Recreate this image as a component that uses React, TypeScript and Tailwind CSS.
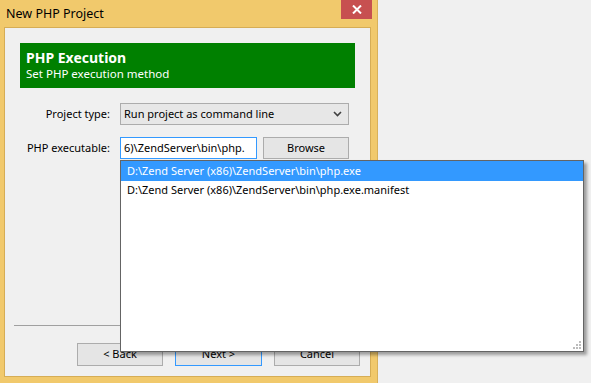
import React from "react";

export default function App() {
  const font = { fontFamily: '"Noto Sans", "Open Sans", sans-serif' };
  return (
    <div className="relative w-[591px] h-[383px] bg-[#f0f0f0] overflow-hidden text-[11px] text-black" style={font}>
      <div className="w-[378px] h-[383px] bg-[#f1c96c] border-r border-[#d8b15a] flex flex-col">
        <div className="h-[27px] flex items-start shrink-0">
          <div className="pl-[6px] pt-[5px] text-[12.5px] leading-[17px] text-black">New PHP Project</div>
          <div className="ml-auto mr-[5px] w-[31px] h-[19px] bg-[#c75050] flex items-center justify-center">
            <svg width="10" height="9" viewBox="0 0 10 9">
              <path d="M1 0.5 L9 8.5 M9 0.5 L1 8.5" stroke="white" strokeWidth="2" />
            </svg>
          </div>
        </div>
        <div className="ml-[4px] w-[367px] h-[350px] bg-[#f0f0f0] border border-[#d6ad55] flex flex-col shrink-0">
          <div className="pl-[15px] pt-[15px]">
            <div className="w-[335px] h-[45px] bg-[#008000] text-white px-[6px] pt-[6px]">
              <div className="text-[14px] font-bold leading-[17px]">PHP Execution</div>
              <div className="text-[11.5px] leading-[15px]">Set PHP execution method</div>
            </div>
          </div>
          <div className="flex items-center mt-[15px] h-[22px]">
            <div className="w-[106px] text-right pr-[1px]">Project type:</div>
            <div className="ml-[9px] w-[229px] h-[22px] border border-[#acacac] bg-[#e7e7e7] flex items-center pl-[3px] pr-[6px]">
              <span>Run project as command line</span>
              <svg className="ml-auto" width="9" height="6" viewBox="0 0 9 6">
                <path d="M1 1 L4.5 4.5 L8 1" stroke="#404040" strokeWidth="1.6" fill="none" />
              </svg>
            </div>
          </div>
          <div className="flex items-center mt-[12px] h-[22px]">
            <div className="w-[106px] text-right pr-[1px]">PHP executable:</div>
            <div className="ml-[9px] w-[137px] h-[22px] border border-[#3399ff] bg-white flex items-center pl-[3px] overflow-hidden whitespace-nowrap">
              6)\ZendServer\bin\php.
            </div>
            <div className="ml-[6px] w-[86px] h-[22px] border border-[#acacac] bg-[#e5e5e5] flex items-center justify-center">
              Browse
            </div>
          </div>
          <div className="flex-1" />
          <div className="mx-[9px] h-px bg-[#a0a0a0]" />
          <div className="flex justify-end gap-[12px] pr-[10px] pt-[17px] pb-[10px]">
            <div className="w-[86px] h-[23px] border border-[#acacac] bg-[#e5e5e5] flex items-center justify-center">&lt; Back</div>
            <div className="w-[87px] h-[23px] border border-[#3399ff] bg-[#e5e5e5] flex items-center justify-center">Next &gt;</div>
            <div className="w-[86px] h-[23px] border border-[#acacac] bg-[#e5e5e5] flex items-center justify-center">Cancel</div>
          </div>
        </div>
      </div>
      <div className="absolute left-[120px] top-[160px] w-[464px] h-[192px] bg-white border border-[#646464] shadow-[3px_3px_3px_rgba(0,0,0,0.35)]">
        <div className="h-[20px] bg-[#3399ff] text-white flex items-center pl-[6px]">D:\Zend Server (x86)\ZendServer\bin\php.exe</div>
        <div className="h-[19px] flex items-center pl-[6px]">D:\Zend Server (x86)\ZendServer\bin\php.exe.manifest</div>
        <svg className="absolute right-[1px] bottom-[1px]" width="12" height="12" viewBox="0 0 12 12">
          <rect x="9" y="3" width="2" height="2" fill="#bcbcbc" />
          <rect x="6" y="6" width="2" height="2" fill="#bcbcbc" />
          <rect x="9" y="6" width="2" height="2" fill="#bcbcbc" />
          <rect x="3" y="9" width="2" height="2" fill="#bcbcbc" />
          <rect x="6" y="9" width="2" height="2" fill="#bcbcbc" />
          <rect x="9" y="9" width="2" height="2" fill="#bcbcbc" />
        </svg>
      </div>
    </div>
  );
}
